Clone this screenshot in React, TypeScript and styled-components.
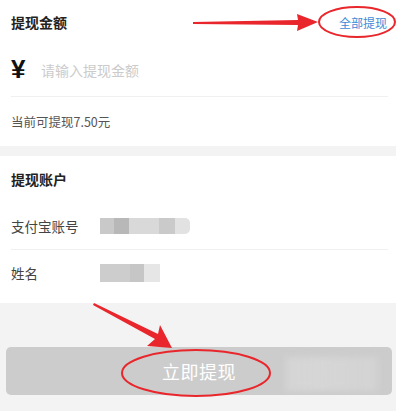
import React, { FC } from "react";
import styled, { createGlobalStyle } from "styled-components";

const GlobalStyle = createGlobalStyle`
  html, body {
    margin: 0;
    padding: 0;
    background: #f3f3f3;
    font-family: "Noto Sans CJK SC", "Noto Sans", sans-serif;
  }
`;

const Page = styled("div")`
  position: relative;
  width: 396px;
  height: 411px;
  overflow: hidden;
  background: #f3f3f3;
`;

const Section = styled("div")<{ $gap?: number; $bottom?: number }>`
  background: #fff;
  margin-top: ${(p) => p.$gap || 0}px;
  padding-bottom: ${(p) => p.$bottom || 0}px;
`;

const Header = styled("div")<{ $h: number }>`
  display: flex;
  align-items: center;
  justify-content: space-between;
  height: ${(p) => p.$h}px;
  padding: 0 9px 0 11px;
`;

const Title = styled("div")`
  font-size: 14px;
  font-weight: 700;
  color: #222;
`;

const AllLink = styled("div")`
  font-size: 12px;
  color: #3d8bd6;
`;

const Row = styled("div")<{ $h: number; $line?: boolean }>`
  display: flex;
  align-items: center;
  height: ${(p) => p.$h}px;
  margin: 0 8px 0 11px;
  border-bottom: ${(p) => (p.$line ? "1px solid #f0f0f0" : "none")};
`;

const Yen = styled("div")`
  font-family: "Liberation Sans", sans-serif;
  font-size: 26px;
  font-weight: 700;
  color: #111;
  width: 30px;
  margin-top: -2px;
`;

const AmountInput = styled("input")`
  border: none;
  outline: none;
  flex: 1;
  font-family: "Noto Sans CJK SC", sans-serif;
  font-size: 14px;
  color: #333;
  padding: 0;
  &::placeholder {
    color: #cbcbcb;
  }
`;

const Hint = styled("div")`
  font-size: 12.5px;
  color: #555;
`;

const Label = styled("div")`
  width: 89px;
  font-size: 13.5px;
  color: #444;
`;

const Mosaic = styled("div")<{ $h: number; $r: number }>`
  display: flex;
  height: ${(p) => p.$h}px;
  filter: blur(0.6px);
  border-radius: 0 ${(p) => p.$r}px ${(p) => p.$r}px 0;
  overflow: hidden;
`;

const Tile = styled("span")<{ $w: number; $c: string }>`
  width: ${(p) => p.$w}px;
  background: ${(p) => p.$c};
`;

const ButtonWrap = styled("div")`
  padding: 44px 4px 0 6px;
`;

const SubmitButton = styled("button")`
  position: relative;
  width: 100%;
  height: 48px;
  border: none;
  border-radius: 5px;
  background: #cccccc;
  color: #fff;
  font-family: "Noto Sans CJK SC", sans-serif;
  font-size: 18px;
  letter-spacing: 0.5px;
  overflow: hidden;
`;

const Smudge = styled("span")`
  position: absolute;
  right: 14px;
  top: 10px;
  width: 92px;
  height: 34px;
  background: linear-gradient(
    90deg,
    rgba(225, 225, 225, 0.45),
    rgba(220, 220, 220, 0.6) 40%,
    rgba(225, 225, 225, 0.35)
  );
  filter: blur(3px);
`;

const Overlay = styled("svg")`
  position: absolute;
  left: 0;
  top: 0;
  pointer-events: none;
`;

const accountTiles = [
  { w: 14, c: "#c9c9c9" },
  { w: 15, c: "#b8b8b8" },
  { w: 30, c: "#d9d9d9" },
  { w: 16, c: "#cacaca" },
  { w: 15, c: "#e2e2e2" },
];

const nameTiles = [
  { w: 30, c: "#cdcdcd" },
  { w: 14, c: "#c6c6c6" },
  { w: 16, c: "#e6e6e6" },
];

const App: FC = () => {
  return (
    <Page>
      <GlobalStyle />
      <Section>
        <Header $h={44}>
          <Title>提现金额</Title>
          <AllLink>全部提现</AllLink>
        </Header>
        <Row $h={52} $line>
          <Yen>¥</Yen>
          <AmountInput placeholder="请输入提现金额" />
        </Row>
        <Row $h={49}>
          <Hint>当前可提现7.50元</Hint>
        </Row>
      </Section>
      <Section $gap={10} $bottom={7}>
        <Header $h={46}>
          <Title>提现账户</Title>
        </Header>
        <Row $h={47} $line>
          <Label>支付宝账号</Label>
          <Mosaic $h={16} $r={5}>
            {accountTiles.map((t, i) => (
              <Tile key={i} $w={t.w} $c={t.c} />
            ))}
          </Mosaic>
        </Row>
        <Row $h={46}>
          <Label>姓名</Label>
          <Mosaic $h={18} $r={0}>
            {nameTiles.map((t, i) => (
              <Tile key={i} $w={t.w} $c={t.c} />
            ))}
          </Mosaic>
        </Row>
      </Section>
      <ButtonWrap>
        <SubmitButton>
          <Smudge />
          立即提现
        </SubmitButton>
      </ButtonWrap>
      <Overlay width={396} height={411} viewBox="0 0 396 411">
        <polygon points="193,22 298,20 297,14 318,22 297,31 298,25 193,24" fill="#e8262b" />
        <ellipse cx={357} cy={22} rx={38} ry={15} fill="none" stroke="#e8262b" strokeWidth={2} />
        <polygon points="94,303 158,334 160,325 172,348 147,346 155,339 93,305" fill="#e8262b" />
        <ellipse cx={196} cy={373} rx={74} ry={23} fill="none" stroke="#e8262b" strokeWidth={2} />
      </Overlay>
    </Page>
  );
};

export default App;
